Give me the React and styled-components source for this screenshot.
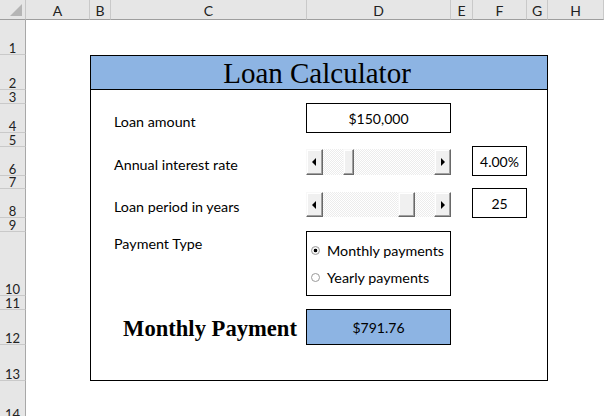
import React from 'react';
import styled, { createGlobalStyle } from 'styled-components';

const GlobalStyle = createGlobalStyle`
  html, body {
    margin: 0;
    padding: 0;
    background: #fff;
  }
  body {
    font-family: Lato, "Open Sans", sans-serif;
    overflow: hidden;
  }
`;

const colWidths = [26, 64, 21, 196, 144, 22, 54, 21, 56];
const rowHeights = [20, 35, 35, 14, 29, 14, 29, 13, 29, 14, 64, 14, 35, 36, 40];
const letters = ['A', 'B', 'C', 'D', 'E', 'F', 'G', 'H'];

const Sheet = styled.div`
  display: grid;
  grid-template-columns: ${colWidths.map((w) => `${w}px`).join(' ')};
  grid-template-rows: ${rowHeights.map((h) => `${h}px`).join(' ')};
  width: 604px;
  height: 416px;
  overflow: hidden;
  background: #fff;
  color: #000;
`;

const Corner = styled.div`
  grid-column: 1;
  grid-row: 1;
  position: relative;
  background: #e6e6e6;
  border-right: 1px solid #c6c6c6;
  border-bottom: 1px solid #9e9e9e;
  box-sizing: border-box;

  &::after {
    content: '';
    position: absolute;
    right: 3px;
    bottom: 3px;
    width: 0;
    height: 0;
    border-left: 12px solid transparent;
    border-bottom: 12px solid #b5b5b5;
  }
`;

const ColHead = styled.div`
  grid-row: 1;
  grid-column: ${(p) => p.$col};
  display: flex;
  align-items: center;
  justify-content: center;
  background: #e6e6e6;
  border-right: 1px solid #c9c9c9;
  border-bottom: 1px solid #9e9e9e;
  box-sizing: border-box;
  font-size: 14px;
  color: #222;
  padding-top: 1px;
`;

const RowHead = styled.div`
  grid-column: 1;
  grid-row: ${(p) => p.$row};
  display: flex;
  align-items: flex-end;
  justify-content: center;
  background: #e6e6e6;
  border-right: 1px solid #a8a8a8;
  border-bottom: 1px solid #c9c9c9;
  box-sizing: border-box;
  font-size: 13px;
  line-height: 12px;
  color: #222;
  overflow: hidden;
`;

const Frame = styled.div`
  grid-column: 3 / 9;
  grid-row: 3 / 15;
  border: 1px solid #000;
  pointer-events: none;
  z-index: 2;
`;

const Title = styled.div`
  grid-column: 3 / 9;
  grid-row: 3;
  display: flex;
  align-items: center;
  justify-content: center;
  background: #8db4e3;
  border-bottom: 1px solid #000;
  font-family: "Liberation Serif", serif;
  font-size: 29px;
  padding: 3px 4px 0 0;
  box-sizing: border-box;
`;

const Label = styled.div`
  grid-column: 4;
  grid-row: ${(p) => p.$row};
  display: flex;
  align-items: ${(p) => (p.$top ? 'flex-start' : 'flex-end')};
  padding: ${(p) => (p.$top ? '3px 0 0 3px' : '0 0 3px 3px')};
  font-size: 14.3px;
`;

const BigLabel = styled.div`
  grid-column: 4;
  grid-row: ${(p) => p.$row};
  display: flex;
  align-items: center;
  justify-content: center;
  font-family: "Liberation Serif", serif;
  font-weight: bold;
  font-size: 22.6px;
  padding: 2px 0 0 2px;
`;

const ValueBox = styled.div`
  grid-column: ${(p) => p.$col};
  grid-row: ${(p) => p.$row};
  display: flex;
  align-items: center;
  justify-content: center;
  border: 1px solid #000;
  margin: -1px 0 0 -1px;
  background: ${(p) => (p.$fill ? '#8db4e3' : '#fff')};
  font-size: 14px;
  padding-top: 1px;
  box-sizing: border-box;
`;

const ScrollBar = styled.div`
  grid-column: 5;
  grid-row: ${(p) => p.$row};
  align-self: start;
  margin: ${(p) => p.$top}px 0 0 -1px;
  height: ${(p) => p.$height}px;
  display: flex;
  background: repeating-conic-gradient(#fff 0 25%, #ececec 0 50%) 0 0 / 2px 2px;
`;

const Raised = styled.div`
  box-sizing: border-box;
  background: #f0f0f0;
  border-top: 1px solid #f8f8f8;
  border-left: 1px solid #f8f8f8;
  border-right: 1px solid #696969;
  border-bottom: 1px solid #696969;
  box-shadow: inset -1px -1px 0 #a0a0a0, inset 1px 1px 0 #fff;
`;

const ArrowButton = styled(Raised)`
  width: 17px;
  flex: none;
  display: flex;
  align-items: center;
  justify-content: center;
`;

const Track = styled.div`
  flex: 1;
  position: relative;
`;

const Thumb = styled(Raised)`
  position: absolute;
  top: 0;
  bottom: 0;
  left: ${(p) => p.$left}px;
  width: ${(p) => p.$width}px;
`;

const Arrow = ({ dir }) => (
  <svg width="5" height="8" viewBox="0 0 5 8">
    {dir === 'left' ? <polygon points="4,0 4,8 0,4" fill="#000" /> : <polygon points="1,0 1,8 5,4" fill="#000" />}
  </svg>
);

const Scroller = ({ row, top, height, thumbLeft, thumbWidth }) => (
  <ScrollBar $row={row} $top={top} $height={height}>
    <ArrowButton>
      <Arrow dir="left" />
    </ArrowButton>
    <Track>
      <Thumb $left={thumbLeft} $width={thumbWidth} />
    </Track>
    <ArrowButton>
      <Arrow dir="right" />
    </ArrowButton>
  </ScrollBar>
);

const RadioGroup = styled.div`
  grid-column: 5;
  grid-row: 11;
  border: 1px solid #000;
  margin: -1px 0 0 -1px;
  display: flex;
  flex-direction: column;
  justify-content: center;
  gap: 10px;
  padding: 0 0 0 4px;
  box-sizing: border-box;
`;

const RadioRow = styled.div`
  display: flex;
  align-items: center;
  gap: 7px;
  font-size: 14.3px;
  height: 17px;
`;

const RadioDot = styled.span`
  width: 9px;
  height: 9px;
  box-sizing: border-box;
  border-radius: 50%;
  border: 1px solid #9a9a9a;
  background: ${(p) => (p.$on ? 'radial-gradient(circle, #000 0 1.6px, #f4f4f4 2.1px)' : '#fff')};
  flex: none;
`;

export default function App() {
  return (
    <>
      <GlobalStyle />
      <Sheet>
        <Corner />
        {letters.map((l, i) => (
          <ColHead key={l} $col={i + 2}>
            {l}
          </ColHead>
        ))}
        {rowHeights.slice(1).map((_, i) => (
          <RowHead key={i} $row={i + 2}>
            {i + 1}
          </RowHead>
        ))}

        <Title>Loan Calculator</Title>

        <Label $row={5}>Loan amount</Label>
        <ValueBox $col={5} $row={5}>$150,000</ValueBox>

        <Label $row={7}>Annual interest rate</Label>
        <Scroller row={7} top={2} height={26} thumbLeft={20} thumbWidth={11} />
        <ValueBox $col={7} $row={7}>4.00%</ValueBox>

        <Label $row={9}>Loan period in years</Label>
        <Scroller row={9} top={3} height={25} thumbLeft={75} thumbWidth={17} />
        <ValueBox $col={7} $row={9}>25</ValueBox>

        <Label $row={11} $top>
          Payment Type
        </Label>
        <RadioGroup>
          <RadioRow>
            <RadioDot $on />
            Monthly payments
          </RadioRow>
          <RadioRow>
            <RadioDot />
            Yearly payments
          </RadioRow>
        </RadioGroup>

        <BigLabel $row={13}>Monthly Payment</BigLabel>
        <ValueBox $col={5} $row={13} $fill>
          $791.76
        </ValueBox>

        <Frame />
      </Sheet>
    </>
  );
}
